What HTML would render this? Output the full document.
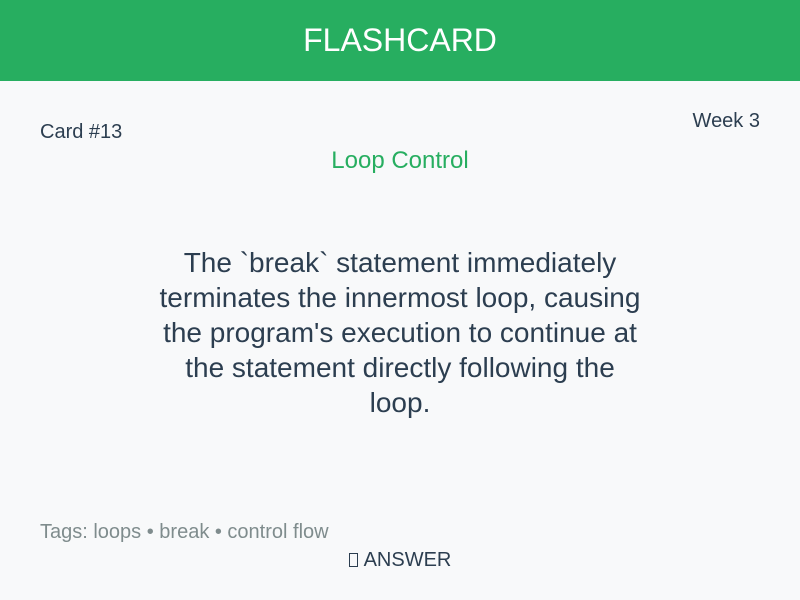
<!DOCTYPE html>
<html><head><meta charset="utf-8"><style>
*{margin:0;padding:0;box-sizing:border-box}
body{width:800px;height:600px;background:#f8f9fa;font-family:"Liberation Sans",sans-serif;color:#2c3e50;position:relative;overflow:hidden}
.hdr{position:absolute;left:0;top:0;width:800px;height:81px;background:#27ae60;color:#fff;font-size:32px;text-align:center;line-height:81px}
.abs{position:absolute;white-space:nowrap}
.body{position:absolute;left:155px;width:490px;top:245px;text-align:center;font-size:28px;line-height:35px}
.box{display:inline-block;width:9px;height:14px;border:1px solid #2c3e50;vertical-align:-1px;margin-right:6px}
</style></head><body>
<div class="hdr">FLASHCARD</div>
<div class="abs" style="left:40px;top:121px;font-size:20px">Card #13</div>
<div class="abs" style="right:40px;top:110px;font-size:20px">Week 3</div>
<div class="abs" style="left:0;width:800px;text-align:center;top:147px;font-size:24px;color:#27ae60">Loop Control</div>
<div class="body">The `break` statement immediately terminates the innermost loop, causing the program's execution to continue at the statement directly following the loop.</div>
<div class="abs" style="left:40px;top:521px;font-size:20px;color:#7f8c8d">Tags: loops • break • control flow</div>
<div class="abs" style="left:0;width:800px;text-align:center;top:549px;font-size:20px"><span class="box"></span>ANSWER</div>
</body></html>
